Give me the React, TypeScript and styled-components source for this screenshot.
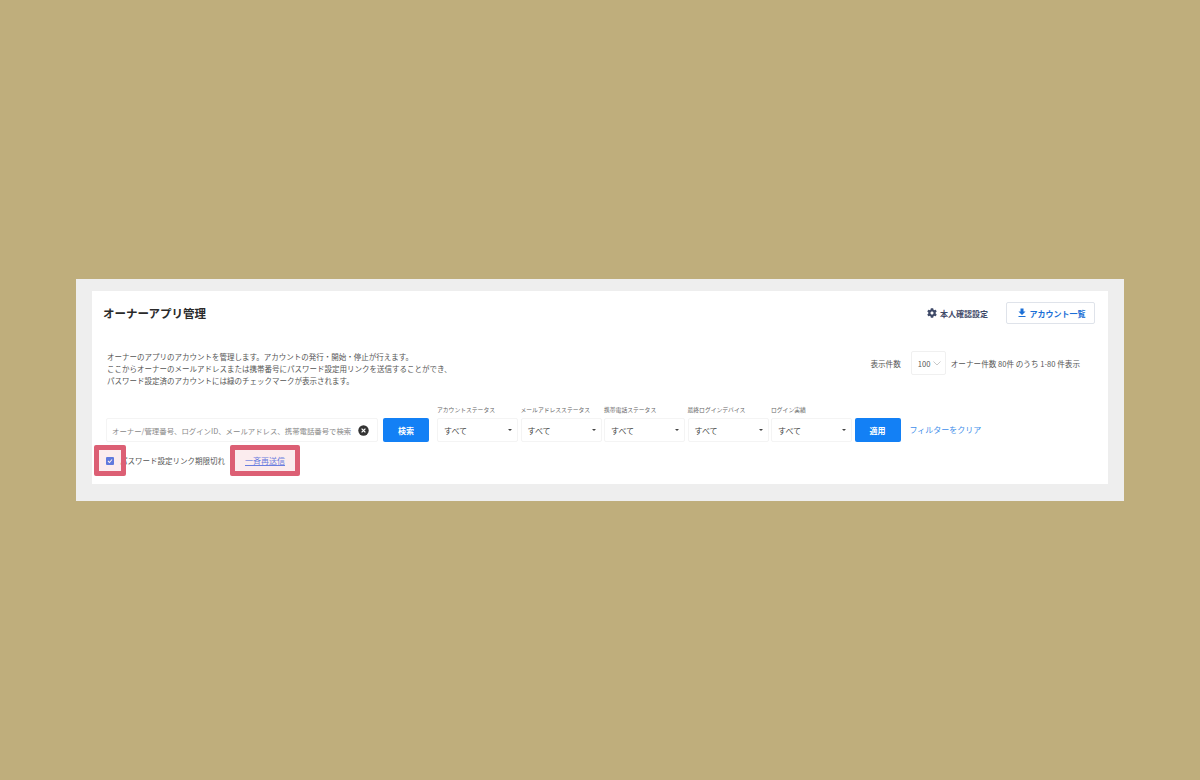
import styled, { createGlobalStyle } from 'styled-components'
import { FaCog } from 'react-icons/fa'
import { MdFileDownload } from 'react-icons/md'

const GlobalStyle = createGlobalStyle`
  html, body {
    margin: 0;
    background: #bfae7c;
  }
  body {
    font-family: "Noto Sans CJK JP", "Noto Sans", sans-serif;
    color: #333;
  }
`

const filters = [
  'アカウントステータス',
  'メールアドレスステータス',
  '携帯電話ステータス',
  '最終ログインデバイス',
  'ログイン実績',
]

export default function App() {
  return (
    <Page>
      <GlobalStyle />
      <Frame>
        <Card>
          <Header>
            <Title>オーナーアプリ管理</Title>
            <HeaderActions>
              <SettingsLink>
                <FaCog size={10} />
                本人確認設定
              </SettingsLink>
              <ExportButton>
                <MdFileDownload size={12} />
                アカウント一覧
              </ExportButton>
            </HeaderActions>
          </Header>

          <InfoRow>
            <Description>
              <p>オーナーのアプリのアカウントを管理します。アカウントの発行・開始・停止が行えます。</p>
              <p>ここからオーナーのメールアドレスまたは携帯番号にパスワード設定用リンクを送信することができ、</p>
              <p>パスワード設定済のアカウントには緑のチェックマークが表示されます。</p>
            </Description>
            <Paging>
              <span>表示件数</span>
              <PageSize>
                100
                <svg width="8" height="5" viewBox="0 0 8 5" fill="none" stroke="#bbb" strokeWidth="0.8">
                  <path d="M0.5 0.5 L4 4 L7.5 0.5" />
                </svg>
              </PageSize>
              <span>オーナー件数 80件 のうち 1-80 件表示</span>
            </Paging>
          </InfoRow>

          <FilterRow>
            <SearchBox>
              <Placeholder>オーナー/管理番号、ログインID、メールアドレス、携帯電話番号で検索</Placeholder>
              <ClearIcon width="11" height="11" viewBox="0 0 11 11">
                <circle cx="5.5" cy="5.5" r="5.2" fill="#333" />
                <path d="M3.6 3.6 L7.4 7.4 M7.4 3.6 L3.6 7.4" stroke="#fff" strokeWidth="1.2" />
              </ClearIcon>
            </SearchBox>
            <PrimaryButton $gap={5.5}>検索</PrimaryButton>
            {filters.map((label) => (
              <FilterField key={label}>
                <FilterLabel>{label}</FilterLabel>
                <SelectBox>
                  すべて
                  <Caret />
                </SelectBox>
              </FilterField>
            ))}
            <PrimaryButton $gap={0}>適用</PrimaryButton>
            <ClearLink>フィルターをクリア</ClearLink>
          </FilterRow>

          <BulkRow>
            <CheckSlot>
              <Checkbox>
                <svg width="6" height="6" viewBox="0 0 6 6" fill="none" stroke="#fff" strokeWidth="1.1">
                  <path d="M1 3 L2.5 4.5 L5 1.5" />
                </svg>
              </Checkbox>
              <Highlight />
            </CheckSlot>
            <CheckLabel>パスワード設定リンク期限切れ</CheckLabel>
            <ResendSlot>
              <ResendLink>一斉再送信</ResendLink>
              <Highlight />
            </ResendSlot>
          </BulkRow>
        </Card>
      </Frame>
    </Page>
  )
}

const Page = styled.div`
  width: 1200px;
  height: 780px;
  padding: 279px 76px 0;
  box-sizing: border-box;
  overflow: hidden;
`

const Frame = styled.div`
  height: 222px;
  padding: 12px 16px 17px;
  box-sizing: border-box;
  background: #eeeeee;
`

const Card = styled.div`
  height: 193px;
  background: #fff;
  padding: 11px 13px 0 11px;
  box-sizing: border-box;
`

const Header = styled.div`
  display: flex;
  align-items: center;
  justify-content: space-between;
  height: 22px;
`

const Title = styled.h1`
  margin: 0;
  font-size: 11.5px;
  font-weight: 700;
  color: #2a2a2a;
`

const HeaderActions = styled.div`
  display: flex;
  align-items: center;
  gap: 18px;
`

const SettingsLink = styled.a`
  display: flex;
  align-items: center;
  gap: 3px;
  font-size: 8px;
  font-weight: 700;
  color: #3f4a68;
`

const ExportButton = styled.button`
  display: flex;
  align-items: center;
  justify-content: center;
  gap: 2px;
  width: 89px;
  height: 22px;
  padding: 0;
  border: 1px solid #dfe3ea;
  border-radius: 2px;
  background: #fff;
  font-family: inherit;
  font-size: 8px;
  font-weight: 700;
  color: #1b6fd6;
`

const InfoRow = styled.div`
  display: flex;
  justify-content: space-between;
  align-items: flex-start;
  margin-top: 27px;
  padding: 0 15px 0 4px;
`

const Description = styled.div`
  font-size: 7.5px;
  line-height: 12px;
  color: #555;

  p {
    margin: 0;
  }
`

const Paging = styled.div`
  display: flex;
  align-items: center;
  font-size: 7.6px;
  color: #555;
  height: 24px;
`

const PageSize = styled.div`
  display: flex;
  align-items: center;
  gap: 3px;
  width: 35px;
  height: 24px;
  padding-left: 6px;
  margin: 0 5px 0 10px;
  border: 1px solid #f0f0f0;
  border-radius: 2px;
  box-sizing: border-box;
`

const FilterRow = styled.div`
  display: flex;
  align-items: flex-end;
  gap: 2.5px;
  margin-top: 19px;
  padding-left: 3px;
`

const SearchBox = styled.div`
  display: flex;
  align-items: center;
  justify-content: space-between;
  width: 272px;
  height: 24px;
  padding: 0 8px 0 5px;
  margin-right: 2.5px;
  border: 1px solid #f4f4f4;
  border-radius: 2px;
  box-sizing: border-box;
`

const Placeholder = styled.span`
  font-size: 7.4px;
  color: #888;
  white-space: nowrap;
`

const ClearIcon = styled.svg`
  flex: none;
`

const PrimaryButton = styled.button<{ $gap: number }>`
  flex: none;
  width: 46px;
  height: 24px;
  margin-right: ${({ $gap }) => $gap}px;
  padding: 0;
  border: 0;
  border-radius: 2px;
  background: #1380f5;
  color: #fff;
  font-family: inherit;
  font-size: 8px;
  font-weight: 700;
`

const FilterField = styled.div`
  display: flex;
  flex-direction: column;
  gap: 4px;
  width: 81px;
`

const FilterLabel = styled.label`
  font-size: 5.8px;
  line-height: 8px;
  color: #666;
  white-space: nowrap;
`

const SelectBox = styled.div`
  display: flex;
  align-items: center;
  justify-content: space-between;
  height: 24px;
  padding: 0 5px 0 6px;
  border: 1px solid #f4f4f4;
  border-radius: 2px;
  box-sizing: border-box;
  font-size: 8px;
  color: #444;
`

const Caret = styled.span`
  width: 0;
  height: 0;
  border-left: 2.5px solid transparent;
  border-right: 2.5px solid transparent;
  border-top: 2.5px solid #444;
`

const ClearLink = styled.a`
  margin-left: 6.5px;
  line-height: 24px;
  font-size: 8px;
  color: #3f8fea;
  white-space: nowrap;
`

const BulkRow = styled.div`
  display: flex;
  align-items: center;
  height: 31px;
  margin-top: 3px;
`

const CheckSlot = styled.div`
  position: relative;
  display: flex;
  align-items: center;
  justify-content: center;
  width: 32px;
  height: 31px;
  margin-left: -9px;
`

const Checkbox = styled.span`
  display: flex;
  align-items: center;
  justify-content: center;
  width: 8px;
  height: 8px;
  border-radius: 1px;
  background: #4f7dec;
`

const CheckLabel = styled.span`
  margin-left: -6px;
  font-size: 7.5px;
  color: #555;
  white-space: nowrap;
`

const ResendSlot = styled.div`
  position: relative;
  display: flex;
  align-items: center;
  justify-content: center;
  width: 70px;
  height: 31px;
  margin-left: 5px;
`

const ResendLink = styled.a`
  font-size: 8px;
  color: #5a82ee;
  text-decoration: underline;
`

const Highlight = styled.div`
  position: absolute;
  inset: 0;
  border: 5px solid #dc5f74;
  border-radius: 2px;
  background: rgba(220, 95, 116, 0.12);
  box-sizing: border-box;
`
